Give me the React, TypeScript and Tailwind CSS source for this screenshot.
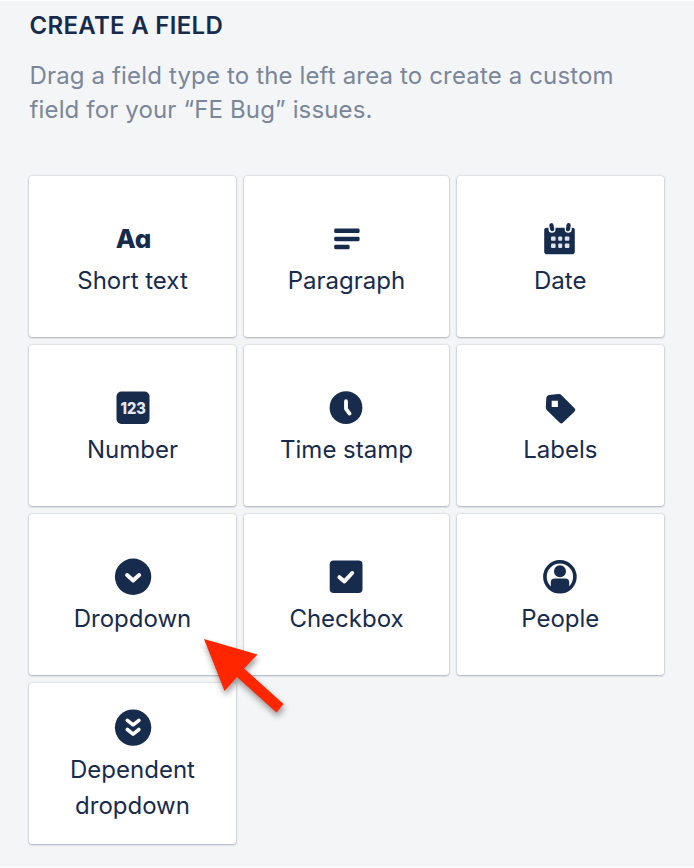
import type { ReactNode } from "react";

const NAVY = "#172b4d";

function Icon({ children }: { children: ReactNode }) {
  return (
    <svg width="46" height="46" viewBox="0 0 46 46" fill="none" className="shrink-0">
      {children}
    </svg>
  );
}

const ParagraphIcon = () => (
  <Icon>
    <g fill={NAVY}>
      <rect x="10.2" y="12.6" width="25.4" height="4.5" rx="1.4" />
      <rect x="10.2" y="20.7" width="25.4" height="4.5" rx="1.4" />
      <rect x="10.2" y="28.8" width="15.4" height="4.5" rx="1.4" />
    </g>
  </Icon>
);

const DateIcon = () => (
  <Icon>
    <path d="M10.4 11.8h25.2q2.2 0 2.2 2.2v21.4q0 2.8-2.8 2.8H10Q7.2 38.2 7.2 35.4V14q0-2.2 3.2-2.2z" fill={NAVY} />
    <path d="M15 8v5.2M31.2 8v5.2" stroke="#fff" strokeWidth="7" strokeLinecap="round" />
    <path d="M14.4 9.2l.8 4M31.6 9.2l-.6 4" stroke={NAVY} strokeWidth="4.2" strokeLinecap="round" />
    <g fill="#dfe3ea">
      <rect x="14" y="20.6" width="4.6" height="4.2" rx="1" />
      <rect x="21.2" y="20.6" width="4" height="4.2" rx="1" />
      <rect x="27.8" y="20.6" width="4.6" height="4.2" rx="1" />
      <rect x="14" y="27.6" width="4.6" height="4.4" rx="1" />
      <rect x="21.2" y="27.6" width="4" height="4.4" rx="1" />
      <rect x="27.8" y="27.6" width="4.6" height="4.4" rx="1" />
    </g>
  </Icon>
);

const NumberIcon = () => (
  <Icon>
    <rect x="6.5" y="6.5" width="33" height="32.5" rx="5" fill={NAVY} />
    <text x="23.2" y="28.7" textAnchor="middle" fontSize="16" fontWeight="800" fill="#e4e7ed" textLength="25.5" lengthAdjust="spacingAndGlyphs">
      123
    </text>
  </Icon>
);

const ClockIcon = () => (
  <Icon>
    <circle cx="22" cy="22.7" r="16.4" fill={NAVY} />
    <path d="M22 16.2v7.6l3.6 4.8" stroke="#fff" strokeWidth="3.8" strokeLinecap="round" strokeLinejoin="round" />
  </Icon>
);

const TagIcon = () => (
  <Icon>
    <path
      fillRule="evenodd"
      d="M12 10l9-.9q2.2-.3 3.8 1.3l12.8 12.8q1.600 1.600 0 3.200L25.800 37.800q-1.500 1.500-3 0L10.200 25.600q-1.500-1.500-1.400-3.600l.5-9q.2-2.500 2.700-3zM14.700 15.800v6.200h6.200v-6.200z"
      fill={NAVY}
    />
  </Icon>
);

const DropdownIcon = () => (
  <Icon>
    <circle cx="23.1" cy="22.8" r="18.2" fill={NAVY} />
    <path d="M17.1 21l6 5.4 6-5.4" stroke="#fff" strokeWidth="4" strokeLinecap="round" strokeLinejoin="round" />
  </Icon>
);

const CheckboxIcon = () => (
  <Icon>
    <rect x="5.7" y="6.5" width="32.8" height="32.5" rx="4" fill={NAVY} />
    <path d="M15.4 23.2l5 4.2 7.8-8.4" stroke="#fff" strokeWidth="4" strokeLinecap="round" strokeLinejoin="round" />
  </Icon>
);

const PeopleIcon = () => (
  <Icon>
    <circle cx="22.9" cy="22.8" r="15" stroke={NAVY} strokeWidth="3.6" />
    <circle cx="23" cy="17.3" r="6" fill={NAVY} />
    <path d="M13.8 35.5V28.5q0-4 4-4h10.4q4 0 4 4v7q-4 3.5-9.200 3.500t-9.200-3.500z" fill={NAVY} />
  </Icon>
);

const DependentIcon = () => (
  <Icon>
    <circle cx="23.1" cy="22.6" r="18.2" fill={NAVY} />
    <path d="M17.3 15.3l5.8 4.6 5.8-4.6M17.3 24.5l5.8 4.6 5.8-4.6" stroke="#fff" strokeWidth="3.6" strokeLinecap="round" strokeLinejoin="round" />
  </Icon>
);

const ShortTextIcon = () => (
  <span className="flex h-[46px] shrink-0 items-center pl-[2px] text-[26px] font-extrabold leading-none [font-feature-settings:'cv11']">
    Aa
  </span>
);

const fields: { label: string; icon: ReactNode }[] = [
  { label: "Short text", icon: <ShortTextIcon /> },
  { label: "Paragraph", icon: <ParagraphIcon /> },
  { label: "Date", icon: <DateIcon /> },
  { label: "Number", icon: <NumberIcon /> },
  { label: "Time stamp", icon: <ClockIcon /> },
  { label: "Labels", icon: <TagIcon /> },
  { label: "Dropdown", icon: <DropdownIcon /> },
  { label: "Checkbox", icon: <CheckboxIcon /> },
  { label: "People", icon: <PeopleIcon /> },
  { label: "Dependent dropdown", icon: <DependentIcon /> },
];

export default function App() {
  return (
    <div className="relative h-[868px] w-[694px] overflow-hidden border-t border-b-2 border-t-white border-b-[#fafbfc] bg-[#f4f5f7] pl-[29px] font-['Inter',sans-serif] text-[#172b4d]">
      <h1 className="pl-[0.5px] pt-[9px] text-[24px] font-semibold leading-[32px] tracking-[0.3px]">CREATE A FIELD</h1>
      <p className="mt-[17px] w-[630px] pl-[0.5px] text-[24px] leading-[34px] tracking-[0.15px] text-[#7a869a]">
        Drag a field type to the left area to create a custom
        <br />
        field for your “FE Bug” issues.
      </p>
      <div className="mt-[49px] grid auto-rows-[161px] grid-cols-[207px_205px_206.5px] gap-2">
        {fields.map((field) => (
          <div
            key={field.label}
            className="flex flex-col items-center justify-center rounded-[3px] bg-white px-6 pt-[2px] text-center shadow-[0_1px_2px_rgba(9,30,66,0.25),0_0_2px_rgba(9,30,66,0.25)]"
          >
            {field.icon}
            <span className="mt-px text-[24px] leading-[36px]">{field.label}</span>
          </div>
        ))}
      </div>
      <svg className="absolute left-[190px] top-[625px] drop-shadow-[1px_4px_3px_rgba(0,0,0,0.4)]" width="110" height="100" viewBox="190 626 110 100">
        <path d="M204 639l53.5 15.5-13.500 14 39.500 35.500-7 8.500-39.500-35.500-12.500 14z" fill="#ff2600" />
      </svg>
    </div>
  );
}
